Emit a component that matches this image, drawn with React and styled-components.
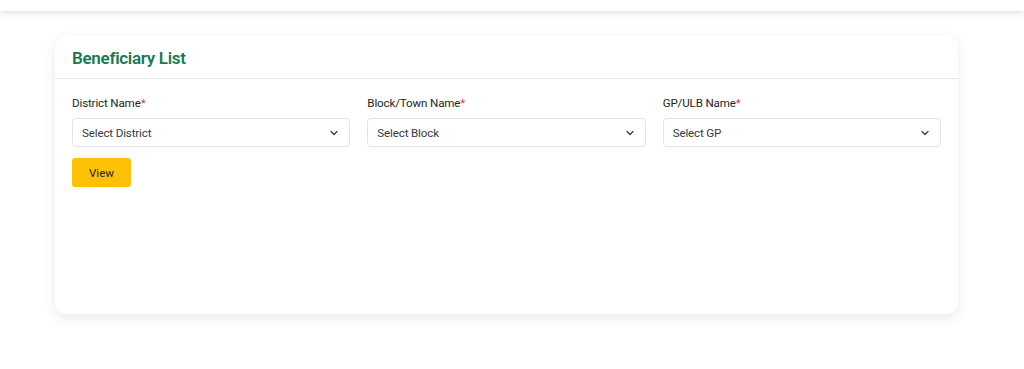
import React from "react";
import styled, { createGlobalStyle } from "styled-components";

const GlobalStyle = createGlobalStyle`
  * { box-sizing: border-box; }
  body {
    margin: 0;
    background: #ffffff;
    font-family: Roboto, "Liberation Sans", Arial, sans-serif;
    color: #212529;
  }
`;

const Page = styled.div`
  width: 100vw;
  min-height: 100vh;
  background: #ffffff;
`;

const TopBar = styled.header`
  height: 11px;
  background: #ffffff;
  box-shadow: 0 2px 6px rgba(0, 0, 0, 0.12);
`;

const Main = styled.main`
  padding: 25px 66px 0 55px;
`;

const Card = styled.section`
  background: #ffffff;
  border-radius: 12px;
  box-shadow: 0 4px 14px rgba(0, 0, 0, 0.09);
  height: 278px;
`;

const CardHeader = styled.div`
  padding: 0 17px;
  height: 43px;
  display: flex;
  align-items: center;
  border-bottom: 1px solid #e6e6e6;
`;

const Title = styled.h2`
  margin: 0;
  padding-top: 2px;
  font-size: 17px;
  letter-spacing: -0.3px;
  font-weight: 600;
  color: #167a50;
`;

const CardBody = styled.div`
  padding: 17px 17px;
  display: flex;
  flex-direction: column;
  gap: 11px;
`;

const FieldGrid = styled.div`
  display: grid;
  grid-template-columns: repeat(3, 1fr);
  gap: 17px;
`;

const Field = styled.div`
  display: flex;
  flex-direction: column;
  gap: 7px;
`;

const Label = styled.label`
  font-size: 11.6px;
  letter-spacing: -0.15px;
  color: #212529;
  line-height: 15px;
`;

const Required = styled.span`
  color: #dc3545;
`;

const SelectBox = styled.div`
  height: 29px;
  border: 1px solid #e3e3e3;
  border-radius: 4px;
  padding: 0 11px 0 9px;
  display: flex;
  align-items: center;
  justify-content: space-between;
  font-size: 11.6px;
  letter-spacing: -0.15px;
  color: #343a40;
  background: #ffffff;
`;

const Button = styled.button`
  align-self: flex-start;
  width: 59px;
  height: 29px;
  border: none;
  border-radius: 3px;
  background: #ffc107;
  color: #212529;
  font-family: inherit;
  font-size: 11.6px;
  cursor: pointer;
`;

const Chevron = () => (
  <svg width="8" height="8" viewBox="0 0 16 16" fill="none">
    <path d="M2 5l6 6 6-6" stroke="#343a40" strokeWidth="2.4" strokeLinecap="round" strokeLinejoin="round" />
  </svg>
);

const fields = [
  { label: "District Name", placeholder: "Select District" },
  { label: "Block/Town Name", placeholder: "Select Block" },
  { label: "GP/ULB Name", placeholder: "Select GP" },
];

export default function App() {
  return (
    <Page>
      <GlobalStyle />
      <TopBar />
      <Main>
        <Card>
          <CardHeader>
            <Title>Beneficiary List</Title>
          </CardHeader>
          <CardBody>
            <FieldGrid>
              {fields.map((f) => (
                <Field key={f.label}>
                  <Label>
                    {f.label}
                    <Required>*</Required>
                  </Label>
                  <SelectBox>
                    <span>{f.placeholder}</span>
                    <Chevron />
                  </SelectBox>
                </Field>
              ))}
            </FieldGrid>
            <Button>View</Button>
          </CardBody>
        </Card>
      </Main>
    </Page>
  );
}
